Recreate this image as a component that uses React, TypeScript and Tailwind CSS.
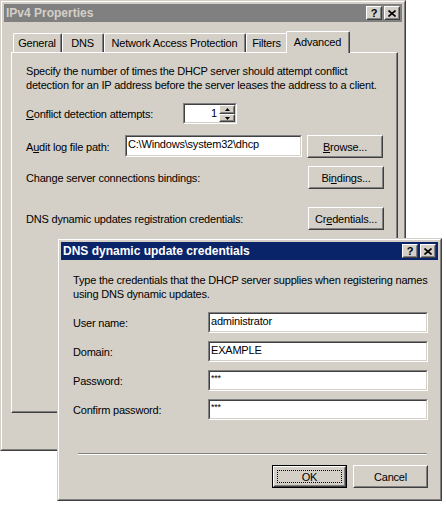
import React from 'react';

const raisedOuter = 'border border-t-white border-l-white border-r-[#404040] border-b-[#404040]';
const raisedInner = 'border border-t-[#d4d0c8] border-l-[#d4d0c8] border-r-[#808080] border-b-[#808080]';
const sunkOuter = 'border border-t-[#808080] border-l-[#808080] border-r-white border-b-white';
const sunkInner = 'border border-t-[#404040] border-l-[#404040] border-r-[#d4d0c8] border-b-[#d4d0c8]';
const winOuter = 'border border-t-[#d4d0c8] border-l-[#d4d0c8] border-r-[#404040] border-b-[#404040]';
const winInner = 'border border-t-white border-l-white border-r-[#808080] border-b-[#808080]';

function CapBtn({ children, className = '' }: { children: React.ReactNode; className?: string }) {
  return (
    <div className={`w-[16px] h-[14px] ${raisedOuter} bg-[#d4d0c8] ${className}`}>
      <div className={`w-full h-full ${raisedInner} flex items-center justify-center text-black`}>{children}</div>
    </div>
  );
}

function TitleBar({ title, active }: { title: string; active: boolean }) {
  return (
    <div
      className={`h-[18px] flex items-center pl-[2px] pr-[2px] ${
        active ? 'bg-[#0a246a] text-white' : 'bg-[#808080] text-[#d4d0c8]'
      }`}
    >
      <span className="flex-1 font-bold text-[12px] tracking-normal leading-[18px]">{title}</span>
      <CapBtn>
        <span className="font-bold text-[11px] leading-[10px] tracking-normal">?</span>
      </CapBtn>
      <CapBtn className="ml-[2px]">
        <svg width="8" height="7" viewBox="0 0 8 7">
          <path d="M0.5 0.5 L7.5 6.5 M7.5 0.5 L0.5 6.5" stroke="black" strokeWidth="1.6" />
        </svg>
      </CapBtn>
    </div>
  );
}

function Btn({ children, className = '', def = false }: { children: React.ReactNode; className?: string; def?: boolean }) {
  if (def) {
    return (
      <div className={`border border-black ${className}`}>
        <div className={`w-full h-full ${raisedOuter}`}>
          <div className={`w-full h-full ${raisedInner} relative flex items-center justify-center`}>
            <div className="absolute left-[2px] top-[2px] right-[2px] bottom-[2px] border border-dotted border-black" />
            {children}
          </div>
        </div>
      </div>
    );
  }
  return (
    <div className={`${raisedOuter} ${className}`}>
      <div className={`w-full h-full ${raisedInner} flex items-center justify-center`}>{children}</div>
    </div>
  );
}

function Input({ value, className = '', small = false }: { value: string; className?: string; small?: boolean }) {
  return (
    <div className={`${sunkOuter} ${className}`}>
      <div className={`w-full h-full ${sunkInner} bg-white pl-[1px] flex items-start`}>
        <span className={small ? 'text-[9px] leading-[10px] pt-[1px]' : 'leading-[14px]'}>{value}</span>
      </div>
    </div>
  );
}

function Tab({ label, w, sel = false }: { label: string; w: string; sel?: boolean }) {
  if (sel) {
    return (
      <div className={`relative z-10 -mb-[1px] -ml-[2px] h-[22px] ${w} bg-[#d4d0c8] border-l border-t border-r border-l-white border-t-white border-r-[#404040] rounded-tl-[2px] rounded-tr-[2px]`}>
        <div className="h-full border-r border-r-[#808080] flex items-center justify-center pb-[2px]">{label}</div>
      </div>
    );
  }
  return (
    <div className={`h-[19px] ${w} bg-[#d4d0c8] border-l border-t border-r border-l-white border-t-white border-r-[#404040] rounded-tl-[2px] rounded-tr-[2px]`}>
      <div className="h-full border-r border-r-[#808080] flex items-center justify-center">{label}</div>
    </div>
  );
}

function ArrowBtn({ up }: { up: boolean }) {
  return (
    <div className={`w-[16px] ${up ? 'h-[9px]' : 'h-[8px]'} ${raisedOuter} bg-[#d4d0c8]`}>
      <div className={`w-full h-full ${raisedInner} flex items-center justify-center`}>
        <svg width="5" height="3" viewBox="0 0 5 3">
          {up ? <polygon points="0,3 2.5,0 5,3" fill="black" /> : <polygon points="0,0 5,0 2.5,3" fill="black" />}
        </svg>
      </div>
    </div>
  );
}

export default function App() {
  return (
    <div className="relative w-[446px] h-[505px] bg-white font-['Liberation_Sans',Arial,sans-serif] text-[11px] leading-[14px] tracking-[-0.2px] text-black">
      {/* Main properties window */}
      <div className={`${winOuter} w-[406px] h-[451px]`}>
        <div className={`${winInner} w-full h-full bg-[#d4d0c8] p-[2px] flex flex-col`}>
          <TitleBar title="IPv4 Properties" active={false} />
          <div className="ml-[7px] mt-[9px] h-[21px] flex items-end pl-[2px]">
            <Tab label="General" w="w-[49px]" />
            <Tab label="DNS" w="w-[42px]" />
            <Tab label="Network Access Protection" w="w-[142px]" />
            <Tab label="Filters" w="w-[42px]" />
            <Tab label="Advanced" w="w-[64px]" sel />
          </div>
          <div className="ml-[7px] w-[387px] h-[361px] border border-t-white border-l-white border-r-[#404040] border-b-[#404040]">
            <div className="h-full border-r border-b border-r-[#808080] border-b-[#808080] pl-[14px] pr-[12px] pt-[11px] flex flex-col">
              <p>
                Specify the number of times the DHCP server should attempt conflict
                <br />
                detection for an IP address before the server leases the address to a client.
              </p>
              <div className="mt-[11px] h-[21px] flex items-center">
                <span className="w-[157px]">
                  <span className="underline">C</span>onflict detection attempts:
                </span>
                <div className={`${sunkOuter} w-[54px] h-[21px]`}>
                  <div className={`w-full h-full ${sunkInner} bg-white flex`}>
                    <div className="flex-1 text-right pr-[2px] leading-[16px]">1</div>
                    <div className="flex flex-col">
                      <ArrowBtn up />
                      <ArrowBtn up={false} />
                    </div>
                  </div>
                </div>
              </div>
              <div className="mt-[11px] h-[23px] flex items-center">
                <span className="w-[99px]">
                  A<span className="underline">u</span>dit log file path:
                </span>
                <Input value="C:\Windows\system32\dhcp" className="w-[177px] h-[22px] self-start" />
                <Btn className="ml-[5px] w-[76px] h-[23px]">
                  <span>
                    <span className="underline">B</span>rowse...
                  </span>
                </Btn>
              </div>
              <div className="mt-[8px] h-[23px] flex items-center justify-between">
                <span>Change server connections bindings:</span>
                <Btn className="w-[76px] h-[23px]">
                  <span>
                    Bi<span className="underline">n</span>dings...
                  </span>
                </Btn>
              </div>
              <div className="mt-[18px] h-[23px] flex items-center justify-between">
                <span>DNS dynamic updates registration credentials:</span>
                <Btn className="w-[76px] h-[23px]">
                  <span>
                    Cr<span className="underline">e</span>dentials...
                  </span>
                </Btn>
              </div>
            </div>
          </div>
        </div>
      </div>

      {/* Credentials dialog */}
      <div className={`absolute left-[57px] top-[238px] w-[385px] h-[263px] ${winOuter}`}>
        <div className={`${winInner} w-full h-full bg-[#d4d0c8] p-[2px] flex flex-col`}>
          <TitleBar title="DNS dynamic update credentials" active />
          <div className="pl-[12px] pr-[10px] pt-[13px] flex flex-col">
            <p>
              Type the credentials that the DHCP server supplies when registering names
              <br />
              using DNS dynamic updates.
            </p>
            <div className="mt-[11px] h-[21px] flex items-center">
              <span className="w-[135px]">User name:</span>
              <Input value="administrator" className="w-[220px] h-[21px]" />
            </div>
            <div className="mt-[8px] h-[21px] flex items-center">
              <span className="w-[135px]">Domain:</span>
              <Input value="EXAMPLE" className="w-[220px] h-[21px]" />
            </div>
            <div className="mt-[8px] h-[21px] flex items-center">
              <span className="w-[135px]">Password:</span>
              <Input value="***" small className="w-[220px] h-[21px]" />
            </div>
            <div className="mt-[8px] h-[21px] flex items-center">
              <span className="w-[135px]">Confirm password:</span>
              <Input value="***" small className="w-[220px] h-[21px]" />
            </div>
            <div className="ml-[5px] mt-[33px] w-[349px] h-[2px] border-t border-b border-t-[#808080] border-b-white" />
            <div className="mt-[10px] flex justify-end gap-[6px]">
              <Btn def className="w-[75px] h-[23px]">
                <span>OK</span>
              </Btn>
              <Btn className="w-[75px] h-[23px]">
                <span>Cancel</span>
              </Btn>
            </div>
          </div>
        </div>
      </div>
    </div>
  );
}
